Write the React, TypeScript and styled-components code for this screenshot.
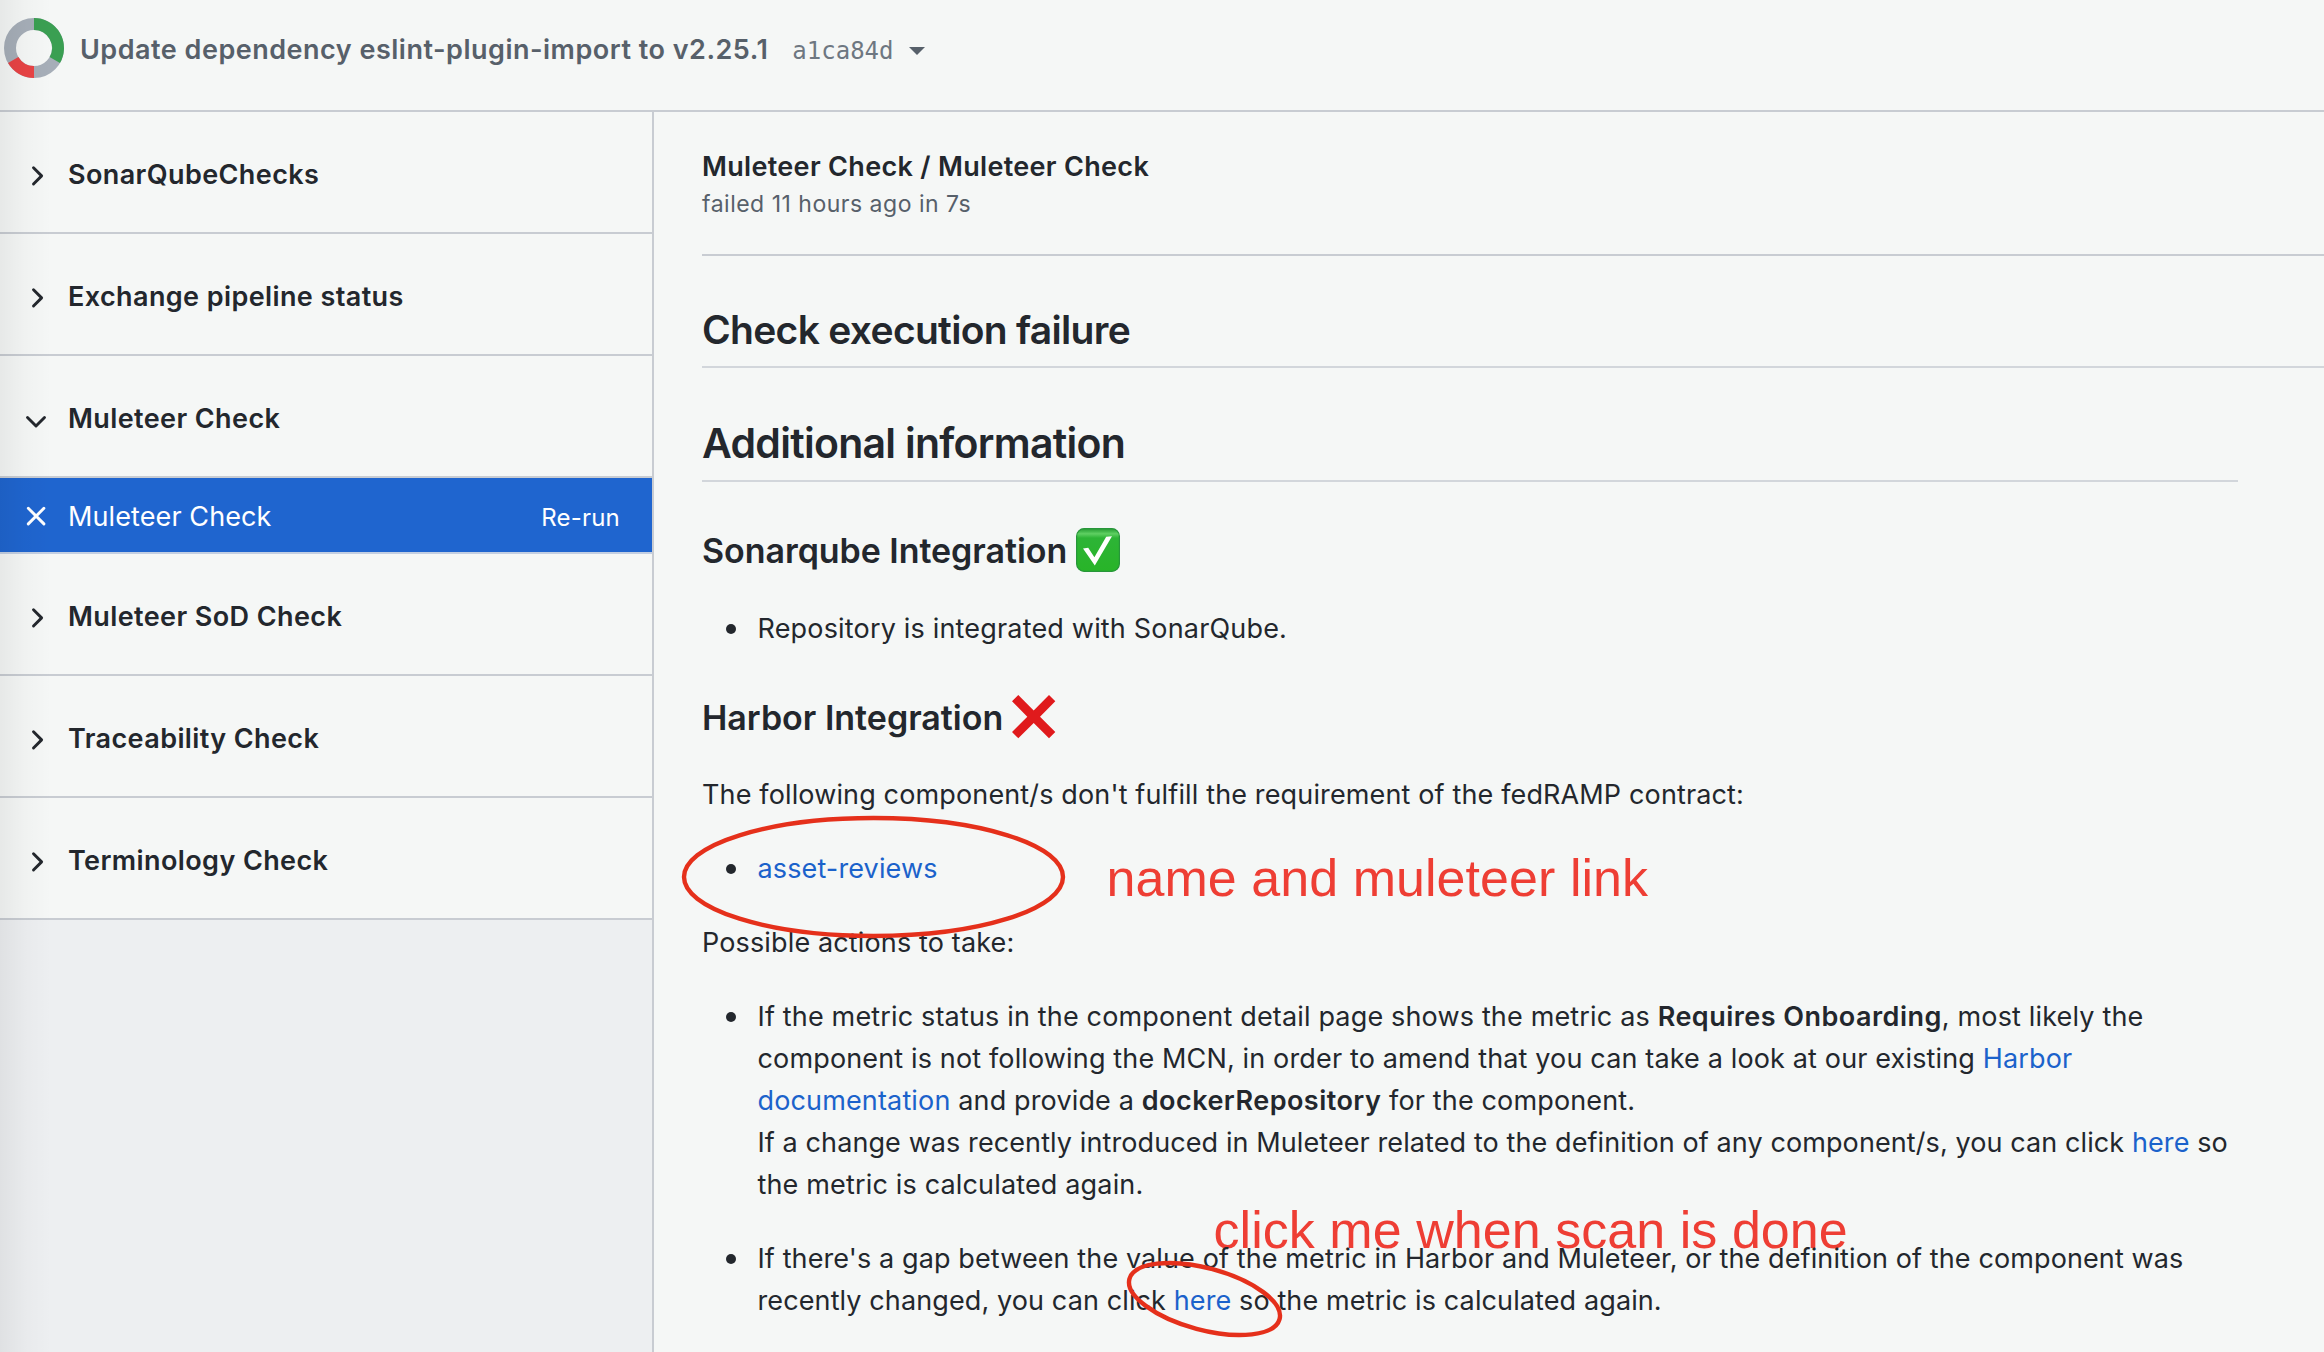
import React from "react";
import styled, { createGlobalStyle } from "styled-components";

const GlobalStyle = createGlobalStyle`
  *, *::before, *::after { box-sizing: border-box; }
  html, body { margin: 0; padding: 0; background: #f5f7f6; }
  body { overflow: hidden; }
`;

const Page = styled.div`
  position: relative;
  display: flex;
  flex-direction: column;
  width: 2324px;
  height: 1352px;
  overflow: hidden;
  background: #f5f7f6;
  color: #23272d;
  font-family: Inter, "Liberation Sans", sans-serif;
  font-size: 27px;
  line-height: 42px;
  white-space: nowrap;
`;

const EdgeShade = styled.div`
  position: absolute;
  top: 0;
  left: 0;
  width: 52px;
  height: 100%;
  background: linear-gradient(to right, rgba(0, 0, 0, 0.06), rgba(0, 0, 0, 0.02) 50%, rgba(0, 0, 0, 0));
  pointer-events: none;
`;

const Header = styled.header`
  display: flex;
  align-items: center;
  flex: none;
  height: 112px;
  padding: 0 4px 14px;
  border-bottom: 2px solid #c8ccd2;
`;

const HeaderText = styled.div`
  display: flex;
  align-items: baseline;
  margin-left: 16px;
  padding-top: 5px;
`;

const CommitTitle = styled.span`
  color: #57606a;
  font-weight: 600;
  letter-spacing: 0.5px;
`;

const Sha = styled.span`
  margin-left: 24px;
  color: #6e7781;
  font-family: "DejaVu Sans Mono", monospace;
  font-size: 24px;
`;

const Caret = styled.span`
  align-self: center;
  margin: 1px 0 0 16px;
  border: 8px solid transparent;
  border-top-color: #57606a;
  border-bottom: 0;
`;

const Body = styled.div`
  display: flex;
  flex: 1;
  min-height: 0;
`;

const Sidebar = styled.nav`
  display: flex;
  flex-direction: column;
  flex: none;
  width: 654px;
  border-right: 2px solid #c8ccd2;
  background: #edeff1;
`;

const Suite = styled.div`
  display: flex;
  align-items: center;
  height: 122px;
  padding: 6px 0 0 20px;
  border-bottom: 2px solid #c8ccd2;
  background: #f5f7f6;
  font-weight: 600;
  letter-spacing: 0.4px;

  svg { margin-top: 1px; }
`;

const SuiteName = styled.span`
  margin-left: 16px;
`;

const Run = styled.div`
  display: flex;
  align-items: center;
  height: 76px;
  padding: 2px 32px 0 20px;
  border-bottom: 2px solid #c3cfe2;
  background: #1f65cf;
  background-clip: padding-box;
  color: #fff;
`;

const RunName = styled.span`
  flex: 1;
  margin-left: 16px;
  padding-top: 1px;
  letter-spacing: 0.1px;
`;

const Rerun = styled.span`
  padding-top: 3px;
  font-size: 24px;
  letter-spacing: 0.2px;
`;

const Main = styled.main`
  position: relative;
  z-index: 1;
  flex: 1;
  min-width: 0;
  padding: 34px 0 0 48px;
`;

const RunHeader = styled.div`
  height: 110px;
  border-bottom: 2px solid #c8ccd2;
`;

const RunTitle = styled.div`
  line-height: 41px;
  font-weight: 600;
  letter-spacing: 0.32px;
`;

const RunMeta = styled.div`
  color: #57606a;
  font-size: 23px;
  line-height: 34px;
  letter-spacing: 0.5px;
`;

const OutputTitle = styled.h1`
  margin: 49px 0 0;
  padding-bottom: 11px;
  border-bottom: 2px solid #d2d6db;
  font-size: 39px;
  font-weight: 600;
  line-height: 50px;
  letter-spacing: -0.69px;
`;

const Markdown = styled.article`
  width: 1536px;
`;

const SectionTitle = styled.h2`
  margin: 49px 0 0;
  padding-bottom: 11px;
  border-bottom: 2px solid #d2d6db;
  font-size: 41px;
  font-weight: 600;
  line-height: 52px;
  letter-spacing: -0.73px;
`;

const SubTitle = styled.h3<{ $top?: number; $track?: number }>`
  display: flex;
  align-items: flex-start;
  gap: 9px;
  height: 44px;
  margin: ${(p) => p.$top ?? 47}px 0 0;
  font-size: 34px;
  font-weight: 600;
  line-height: 44px;
  letter-spacing: ${(p) => p.$track ?? 0}px;
`;

const Status = styled.svg`
  flex: none;
  margin-top: -1px;
`;

const Paragraph = styled.p<{ $top?: number }>`
  margin: ${(p) => p.$top ?? 32}px 0 0;
  letter-spacing: 0.14px;
`;

const List = styled.ul<{ $top?: number }>`
  display: flex;
  flex-direction: column;
  gap: 32px;
  margin: ${(p) => p.$top ?? 32}px 0 0;
  padding: 0;
  list-style: none;
`;

const Item = styled.li<{ $track?: number }>`
  display: flex;
  align-items: flex-start;
  padding-left: 24px;
  letter-spacing: ${(p) => p.$track ?? 0.13}px;

  &::before {
    content: "";
    flex: none;
    width: 10px;
    height: 10px;
    margin: 16px 21.5px 0 0;
    border-radius: 50%;
    background: #23272d;
  }
`;

const Sentence = styled.span<{ $track: number }>`
  letter-spacing: ${(p) => p.$track}px;
`;

const Link = styled.a`
  color: #1b62cb;
  text-decoration: none;
`;

const Strong = styled.strong`
  font-weight: 600;
  letter-spacing: 0.47px;
`;

const Note = styled.div<{ $x: number; $y: number }>`
  position: absolute;
  left: ${(p) => p.$x}px;
  top: ${(p) => p.$y}px;
  color: #ee3e34;
  font-family: "Liberation Sans", Arial, sans-serif;
  font-size: 52px;
  line-height: 60px;
  letter-spacing: 0.05px;
`;

const Ellipses = styled.svg`
  position: absolute;
  z-index: 2;
  top: 0;
  left: 0;
  pointer-events: none;
`;

const StatusDonut = () => (
  <svg width="60" height="60" viewBox="-30 -30 60 60" fill="none" strokeWidth="12">
    <circle r="24" stroke="#a6aeb8" />
    <path d="M0-24A24 24 0 0 1 20.78 12" stroke="#3a9f52" />
    <path d="M0 24A24 24 0 0 1-20.78 12" stroke="#e84345" />
  </svg>
);

const icons = {
  closed: "M13.5 7.8L21.6 15.9L13.5 24",
  open: "M7.5 13.5L16 22L24.5 13.5",
  failed: "M8.3 8.3L23.9 23.9M23.9 8.3L8.3 23.9",
};

const LineIcon = ({ name }: { name: keyof typeof icons }) => (
  <svg width="32" height="32" fill="none" stroke="currentColor" strokeWidth="2.9" strokeLinecap="round" strokeLinejoin="round">
    <path d={icons[name]} />
  </svg>
);

const CheckBadge = () => (
  <Status width="44" height="44" viewBox="0 0 44 44">
    <defs>
      <linearGradient id="badge" x1="0" y1="0" x2="0" y2="1">
        <stop offset="0" stopColor="#2c9a36" />
        <stop offset="0.06" stopColor="#3fb548" />
        <stop offset="0.12" stopColor="#5fcf62" />
        <stop offset="0.22" stopColor="#2db436" />
        <stop offset="1" stopColor="#28b428" />
      </linearGradient>
    </defs>
    <rect x="0.6" y="0.6" width="42.8" height="42.8" rx="7.6" fill="url(#badge)" stroke="#27963a" strokeWidth="1.2" />
    <path d="M7 20.4L12.2 19.8L18.4 29.2L30.2 8.8L36 8.3L18.8 37.4Z" fill="#fff" />
  </Status>
);

const CrossMark = () => (
  <Status width="44" height="44" viewBox="0 0 44 44">
    <path
      d="M6.3 0L21.7 15.4L37 0L43.3 6.2L28 21.7L43.3 37.1L37 43.3L21.7 28L6.3 43.3L0 37.1L15.3 21.7L0 6.2Z"
      fill="#e01a1c"
    />
  </Status>
);

const before = ["SonarQubeChecks", "Exchange pipeline status"];
const after = ["Muleteer SoD Check", "Traceability Check", "Terminology Check"];

const SuiteRow = ({ name, open }: { name: string; open?: boolean }) => (
  <Suite>
    <LineIcon name={open ? "open" : "closed"} />
    <SuiteName>{name}</SuiteName>
  </Suite>
);

export default function App() {
  return (
    <Page>
      <GlobalStyle />
      <Header>
        <StatusDonut />
        <HeaderText>
          <CommitTitle>Update dependency eslint-plugin-import to v2.25.1</CommitTitle>
          <Sha>a1ca84d</Sha>
          <Caret />
        </HeaderText>
      </Header>
      <Body>
        <Sidebar>
          {before.map((name) => (
            <SuiteRow key={name} name={name} />
          ))}
          <SuiteRow name="Muleteer Check" open />
          <Run>
            <LineIcon name="failed" />
            <RunName>Muleteer Check</RunName>
            <Rerun>Re-run</Rerun>
          </Run>
          {after.map((name) => (
            <SuiteRow key={name} name={name} />
          ))}
        </Sidebar>
        <Main>
          <RunHeader>
            <RunTitle>Muleteer Check / Muleteer Check</RunTitle>
            <RunMeta>failed 11 hours ago in 7s</RunMeta>
          </RunHeader>
          <OutputTitle>Check execution failure</OutputTitle>
          <Markdown>
            <SectionTitle>Additional information</SectionTitle>
            <SubTitle $track={-0.05}>
              Sonarqube Integration
              <CheckBadge />
            </SubTitle>
            <List $top={35}>
              <Item $track={0.18}>Repository is integrated with SonarQube.</Item>
            </List>
            <SubTitle $top={46}>
              Harbor Integration
              <CrossMark />
            </SubTitle>
            <Paragraph $top={34}>
              The following component/s don't fulfill the requirement of the fedRAMP contract:
            </Paragraph>
            <List>
              <Item>
                <Link>asset-reviews</Link>
              </Item>
            </List>
            <Paragraph>Possible actions to take:</Paragraph>
            <List>
              <Item>
                <div>
                  <Sentence $track={0.16}>
                    If the metric status in the component detail page shows the metric as{" "}
                    <Strong>Requires Onboarding</Strong>, most likely the
                  </Sentence>
                  <br />
                  <Sentence $track={0.145}>
                    component is not following the MCN, in order to amend that you can take a look at our existing{" "}
                    <Link>Harbor</Link>
                    <br />
                    <Link>documentation</Link> and provide a <Strong>dockerRepository</Strong> for the component.
                  </Sentence>
                  <br />
                  <Sentence $track={0.095}>
                    If a change was recently introduced in Muleteer related to the definition of any component/s, you
                    can click <Link>here</Link> so
                  </Sentence>
                  <br />
                  <Sentence $track={0.16}>the metric is calculated again.</Sentence>
                </div>
              </Item>
              <Item $track={0.11}>
                <div>
                  If there's a gap between the value of the metric in Harbor and Muleteer, or the definition of the
                  component was
                  <br />
                  recently changed, you can click <Link>here</Link> so the metric is calculated again.
                </div>
              </Item>
            </List>
          </Markdown>
        </Main>
      </Body>
      <Note $x={1106.5} $y={848}>name and muleteer link</Note>
      <Note $x={1213.5} $y={1200}>click me when scan is done</Note>
      <Ellipses width="2324" height="1352" fill="none" stroke="#e5301b" strokeWidth="4.4">
        <ellipse cx="873.5" cy="877" rx="189.5" ry="59" />
        <ellipse cx="1204.5" cy="1299" rx="77.7" ry="30.9" transform="rotate(15 1204.5 1299)" />
      </Ellipses>
      <EdgeShade />
    </Page>
  );
}
